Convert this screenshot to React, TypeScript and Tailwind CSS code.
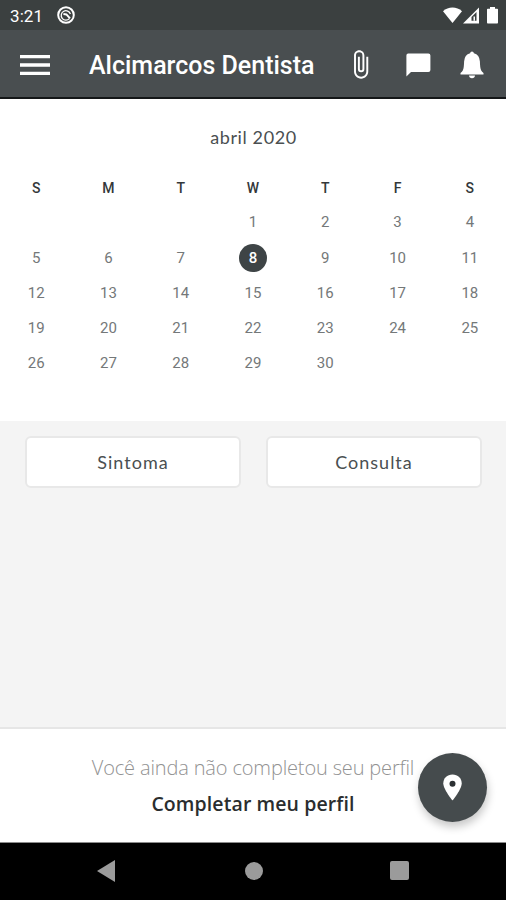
import React from "react";
import { MdAttachFile, MdMenu } from "react-icons/md";

const weekDays = ["S", "M", "T", "W", "T", "F", "S"];
const firstWeekDay = 3;
const daysInMonth = 30;
const today = 8;

const StatusBar = () => {
  return (
    <div className="flex h-[30px] items-center bg-[#3b4040] pr-[8px] pl-[10px] text-white">
      <p className="w-[47px] pt-[1px] text-[17px] leading-[30px] tracking-[0.1px]">
        3:21
      </p>
      <svg className="h-[18px] w-[18px]" viewBox="0 0 18 18" fill="none">
        <circle cx="9" cy="9" r="7.8" stroke="#fff" strokeWidth="2" />
        <path
          d="M12.4 12.6A4.7 4.7 0 1 1 13.4 8"
          stroke="#fff"
          strokeWidth="1.3"
        />
        <path d="M6.4 8L9.4 8.4 13 12.4" stroke="#fff" strokeWidth="2" />
      </svg>
      <div className="ml-auto flex items-center">
        <svg className="h-[17px] w-[19px]" viewBox="0 0 19 17" fill="#fff">
          <path d="M0 4.2C5.2-.6 13.8-.6 19 4.2L9.5 16z" />
        </svg>
        <svg
          className="ml-[1px] h-[17px] w-[16px]"
          viewBox="0 0 16 17"
          fill="none"
        >
          <path d="M0 16.5L16 .5V16.5z" fill="#fff" />
          <path d="M8.5 13.8V10.1L13.5 5.1V13.8z" fill="#3b4040" />
          <path d="M10.5 9.5h1.5v4.3h-1.5z" fill="#fff" />
        </svg>
        <svg className="ml-[8px] h-[17px] w-[11px]" viewBox="0 0 11 17" fill="#fff">
          <path d="M3 0h5v1.8h2.2q.8 0 .8.8v13q0 .9-.8.9H.8q-.8 0-.8-.9v-13q0-.8.8-.8H3z" />
        </svg>
      </div>
    </div>
  );
};

const AppBar = () => {
  return (
    <header className="flex h-[69px] items-center border-b-2 border-[#141718] bg-[#494e50] pt-[2px] pl-[15px] text-white">
      <button>
        <MdMenu className="h-[40px] w-[40px]" />
      </button>
      <h1 className="ml-[34px] w-[256px] pt-[3px] text-[25px] leading-[30px] font-medium whitespace-nowrap">
        Alcimarcos Dentista
      </h1>
      <button>
        <MdAttachFile className="h-[31px] w-[31px]" />
      </button>
      <button className="ml-[30px]">
        <svg className="h-[24px] w-[25px]" viewBox="0 0 25 24" fill="#fff">
          <path d="M2.2.5h20.2q2 0 2 2v14.6q0 2-2 2H5L.4 23.6V2.5q0-2 1.8-2z" />
        </svg>
      </button>
      <button className="ml-[29px]">
        <svg className="h-[28px] w-[24px]" viewBox="0 0 24 28" fill="#fff">
          <path d="M12 .4q1.7 0 1.9 1.9 5.6 1.5 6 8.2.1 6.4 1.2 8.7.8 1.7 2.4 2.7v1.5H.5v-1.5q1.6-1 2.4-2.7 1.1-2.3 1.2-8.7.4-6.7 6-8.2Q10.3.4 12 .4z" />
          <path d="M9 24.6h6q-.3 2.7-3 2.7t-3-2.7z" />
        </svg>
      </button>
    </header>
  );
};

const Calendar = () => {
  const blanks = Array.from({ length: firstWeekDay });
  const days = Array.from({ length: daysInMonth }, (_, i) => i + 1);

  return (
    <section className="h-[322px] bg-white pt-[24px]">
      <p className="pl-px text-center font-[Lato,sans-serif] text-[18px] leading-[28px] tracking-[0.6px] text-[#4a4f51]">
        abril 2020
      </p>
      <div className="mt-[19px] grid grid-cols-7 text-center text-[14px] leading-[36px] font-medium text-[#33383a]">
        {weekDays.map((day, i) => (
          <p key={i}>{day}</p>
        ))}
      </div>
      <div className="-mt-px grid auto-rows-[35.2px] grid-cols-7 place-items-center text-[15px] text-[#747879]">
        {blanks.map((_, i) => (
          <span key={`blank-${i}`} />
        ))}
        {days.map((day) =>
          day === today ? (
            <p
              key={day}
              className="h-[28px] w-[28px] rounded-full bg-[#3e4446] text-center leading-[28px] font-medium text-white"
            >
              {day}
            </p>
          ) : (
            <p key={day}>{day}</p>
          ),
        )}
      </div>
    </section>
  );
};

const actions = ["Sintoma", "Consulta"];

const App = () => {
  return (
    <div className="flex h-[900px] w-full flex-col bg-[#f4f4f4] font-[Roboto,sans-serif]">
      <StatusBar />
      <AppBar />
      <Calendar />
      <main className="flex-1 pt-[15px] pr-[24px] pl-[25px]">
        <div className="grid grid-cols-2 gap-[25px]">
          {actions.map((action) => (
            <button
              key={action}
              className="h-[52px] rounded-[6px] border-2 border-[#e8e8e8] bg-white font-[Lato,sans-serif] text-[18px] tracking-[1px] text-[#4a4f51]"
            >
              {action}
            </button>
          ))}
        </div>
      </main>
      <footer className="relative h-[116px] border-t-2 border-b border-t-[#e6e6e6] border-b-[#8b8b8b] bg-white pt-[21px] text-center font-['Open_Sans',sans-serif]">
        <p className="text-[20px] leading-[36px] font-light tracking-[-0.15px] text-[#929292]">
          Você ainda não completou seu perfil
        </p>
        <p className="text-[19.5px] leading-[36px] font-[550] tracking-[0.1px] text-[#2a2d2e]">
          Completar meu perfil
        </p>
        <button className="absolute top-[24px] right-[19px] flex h-[69px] w-[69px] items-center justify-center rounded-full bg-[#454b4d] text-white shadow-[1px_5px_8px_rgba(0,0,0,0.22)]">
          <svg className="h-[27px] w-[19px]" viewBox="0 0 19 27">
            <path
              d="M9.5.5C14.8.5 18.7 4.4 18.7 9.3 18.7 15.5 9.5 26.5 9.5 26.5S.3 15.5.3 9.3C.3 4.4 4.2.5 9.5.5z"
              fill="#fff"
            />
            <circle cx="9.5" cy="9.7" r="3" fill="#2b3032" />
          </svg>
        </button>
      </footer>
      <nav className="flex h-[57px] items-center bg-black pb-[2px]">
        <svg className="ml-[97px] h-[22px] w-[18px]" viewBox="0 0 18 22">
          <path d="M0 11L18 0V22z" fill="#9b9b9b" />
        </svg>
        <span className="ml-[130px] h-[18px] w-[18px] rounded-full bg-[#9b9b9b]" />
        <span className="ml-[127px] h-[19px] w-[19px] rounded-[2px] bg-[#9b9b9b]" />
      </nav>
    </div>
  );
};

export default App;
